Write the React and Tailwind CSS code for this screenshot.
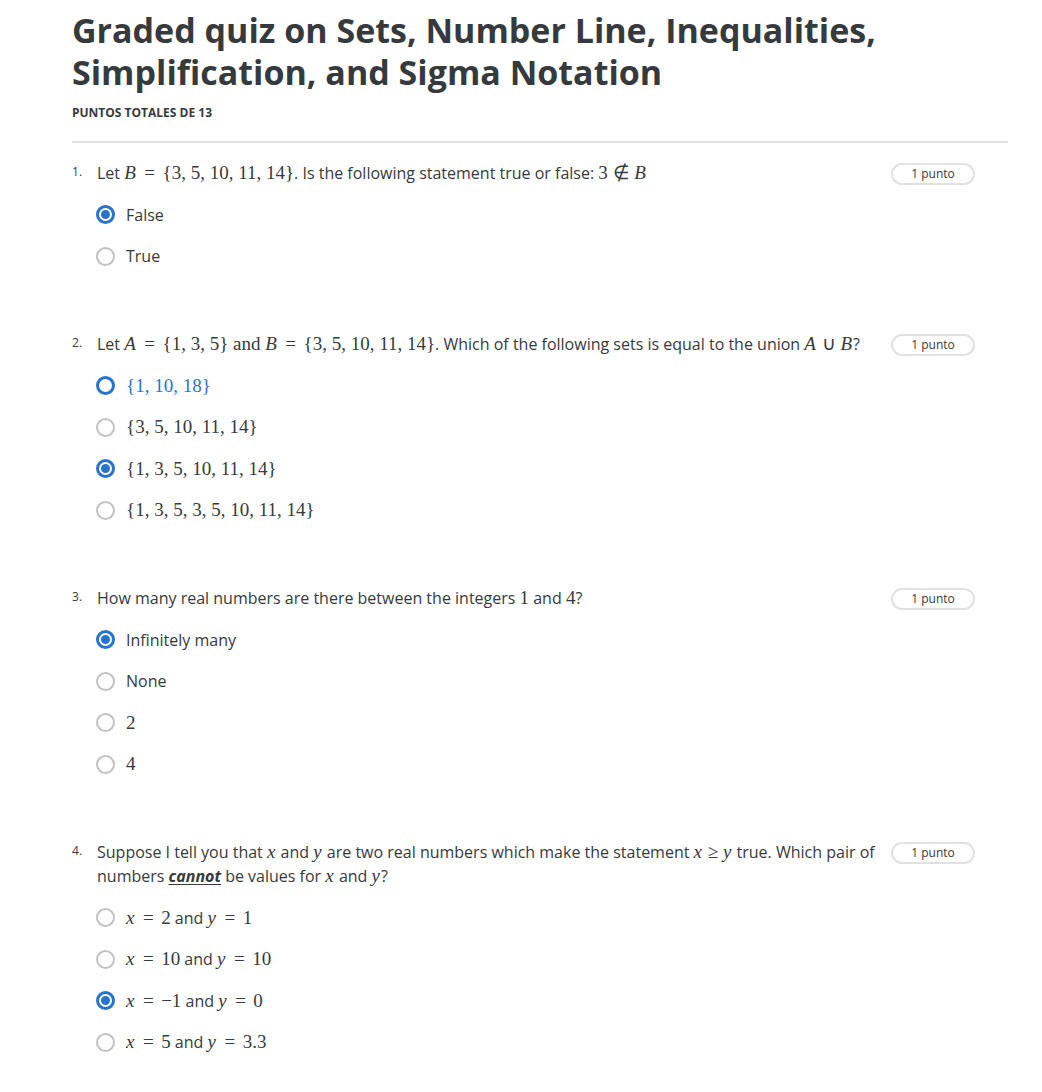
const sans = { fontFamily: '"Open Sans", "Noto Sans", sans-serif' }

const M = ({ children }) => (
	<span className="font-['Liberation_Serif',serif] text-[19px] leading-none">{children}</span>
)
const V = ({ children }) => <span className="italic pr-[1px]">{children}</span>
const Eq = () => <span className="mx-[7.5px]">=</span>

const Radio = ({ state }) => {
	if (state === 'checked') {
		return (
			<span className="flex h-[19px] w-[19px] shrink-0 items-center justify-center rounded-full border-[3px] border-[#2a73cc]">
				<span className="h-[9px] w-[9px] rounded-full bg-[#2a73cc]" />
			</span>
		)
	}
	if (state === 'focus') {
		return <span className="h-[19px] w-[19px] shrink-0 rounded-full border-[3px] border-[#2a73cc]" />
	}
	return <span className="h-[19px] w-[19px] shrink-0 rounded-full border-2 border-[#c2c2c2]" />
}

const Option = ({ state, blue, children }) => (
	<div className="flex h-[41.5px] items-center pl-[24px]">
		<Radio state={state} />
		<div className={`ml-[11px] text-[16px] ${blue ? 'text-[#2a73cc]' : 'text-[#373a3c]'}`}>{children}</div>
	</div>
)

const Question = ({ num, children, options, className = '' }) => (
	<div className={className}>
		<div className="flex items-start">
			<div className="w-[25px] shrink-0 pt-[1px] text-[12px] leading-[20px] text-[#373a3c]">{num}.</div>
			<div className="flex-1 text-[16px] leading-[24px] text-[#373a3c]">{children}</div>
			<div className="ml-[8px] mr-[33px] mt-[2px] flex h-[22px] w-[84px] shrink-0 items-center justify-center rounded-full border-2 border-[#e1e1e1] text-[12px] text-[#373a3c]">
				1 punto
			</div>
		</div>
		<div className="mt-[9px]">
			{options.map((o, i) => (
				<Option key={i} state={o.state} blue={o.blue}>
					{o.label}
				</Option>
			))}
		</div>
	</div>
)

export default function App() {
	return (
		<div className="min-h-screen bg-white" style={sans}>
			<div className="px-[72px] pt-[9px] pr-[34px]">
				<h1 className="text-[34px] font-bold leading-[42px] text-[#373a3c]">
					Graded quiz on Sets, Number Line, Inequalities,
					<br />
					Simplification, and Sigma Notation
				</h1>
				<div className="mt-[12px] text-[12px] font-bold leading-[16px] text-[#373a3c]">PUNTOS TOTALES DE 13</div>
				<div className="mt-[20px] h-[2px] bg-[#e2e2e2]" />

				<Question
					className="mt-[18px]"
					num={1}
					options={[
						{ state: 'checked', label: 'False' },
						{ state: 'none', label: 'True' },
					]}
				>
					Let <M><V>B</V><Eq />{'{'}3, 5, 10, 11, 14{'}'}</M>. Is the following statement true or false:{' '}
					<M>3 ∉ <V>B</V></M>
				</Question>

				<Question
					className="mt-[55px]"
					num={2}
					options={[
						{ state: 'focus', blue: true, label: <M>{'{'}1, 10, 18{'}'}</M> },
						{ state: 'none', label: <M>{'{'}3, 5, 10, 11, 14{'}'}</M> },
						{ state: 'checked', label: <M>{'{'}1, 3, 5, 10, 11, 14{'}'}</M> },
						{ state: 'none', label: <M>{'{'}1, 3, 5, 3, 5, 10, 11, 14{'}'}</M> },
					]}
				>
					Let <M><V>A</V><Eq />{'{'}1, 3, 5{'}'} and <V>B</V><Eq />{'{'}3, 5, 10, 11, 14{'}'}</M>. Which of the following
					sets is equal to the union <M><V>A</V> ∪ <V>B</V></M>?
				</Question>

				<Question
					className="mt-[55px]"
					num={3}
					options={[
						{ state: 'checked', label: 'Infinitely many' },
						{ state: 'none', label: 'None' },
						{ state: 'none', label: <M>2</M> },
						{ state: 'none', label: <M>4</M> },
					]}
				>
					How many real numbers are there between the integers <M>1</M> and <M>4</M>?
				</Question>

				<Question
					className="mt-[55px]"
					num={4}
					options={[
						{ state: 'none', label: <><M><V>x</V><Eq />2</M> and <M><V>y</V><Eq />1</M></> },
						{ state: 'none', label: <><M><V>x</V><Eq />10</M> and <M><V>y</V><Eq />10</M></> },
						{ state: 'checked', label: <><M><V>x</V><Eq />−1</M> and <M><V>y</V><Eq />0</M></> },
						{ state: 'none', label: <><M><V>x</V><Eq />5</M> and <M><V>y</V><Eq />3.3</M></> },
					]}
				>
					Suppose I tell you that <M><V>x</V></M> and <M><V>y</V></M> are two real numbers which make the statement{' '}
					<M><V>x</V> ≥ <V>y</V></M> true. Which pair of numbers{' '}
					<strong className="font-bold italic underline underline-offset-2">cannot</strong> be values for{' '}
					<M><V>x</V></M> and <M><V>y</V></M>?
				</Question>
			</div>
		</div>
	)
}
